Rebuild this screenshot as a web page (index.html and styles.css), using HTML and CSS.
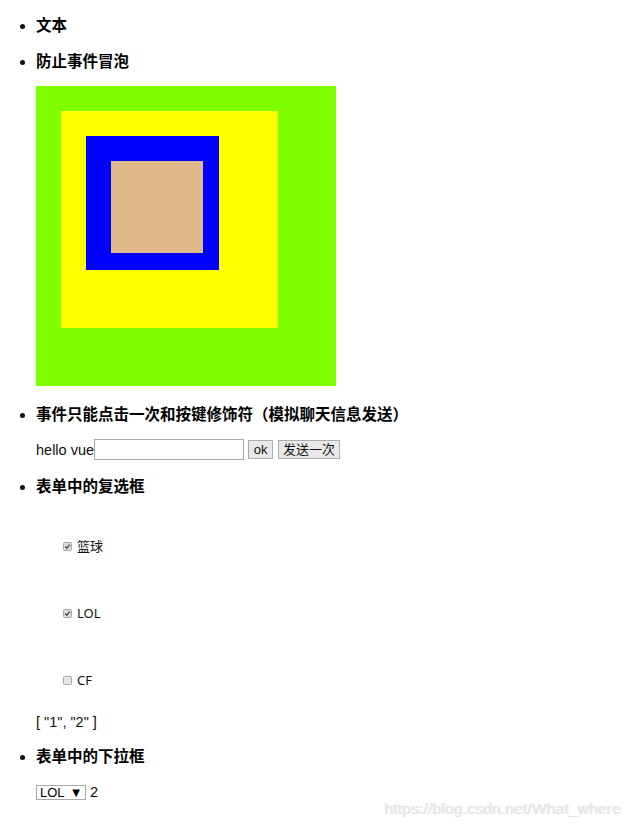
FILE: index.html
```html
<!DOCTYPE html>
<html lang="zh">
<head>
<meta charset="utf-8">
<title>Vue demo</title>
<link rel="stylesheet" href="styles.css">
</head>
<body>
<ul class="list">
  <li class="item">
    <h3 class="title">文本</h3>
  </li>
  <li class="item">
    <h3 class="title title-gap16">防止事件冒泡</h3>
    <div class="box box-green">
      <div class="box box-yellow">
        <div class="box box-blue">
          <div class="box box-tan"></div>
        </div>
      </div>
    </div>
  </li>
  <li class="item">
    <h3 class="title title-gap18">事件只能点击一次和按键修饰符（模拟聊天信息发送）</h3>
    <div class="send-row"><span class="text">hello vue</span><input class="text-input" type="text"><button class="btn btn-ok">ok</button><button class="btn btn-once">发送一次</button></div>
  </li>
  <li class="item">
    <h3 class="title title-gap16">表单中的复选框</h3>
    <div class="checks">
      <label class="check-row">
        <svg class="cb" width="9" height="9" viewBox="0 0 9 9"><rect x="0.5" y="0.5" width="8" height="8" rx="1" fill="#dcdcdc" stroke="#a8a8a8"/><path d="M2.2 4.6 L3.8 6.2 L6.8 2.6" fill="none" stroke="#4a4a4a" stroke-width="1.4"/></svg>
        <span class="check-text">篮球</span>
      </label>
      <label class="check-row">
        <svg class="cb" width="9" height="9" viewBox="0 0 9 9"><rect x="0.5" y="0.5" width="8" height="8" rx="1" fill="#dcdcdc" stroke="#a8a8a8"/><path d="M2.2 4.6 L3.8 6.2 L6.8 2.6" fill="none" stroke="#4a4a4a" stroke-width="1.4"/></svg>
        <span class="check-text">LOL</span>
      </label>
      <label class="check-row">
        <svg class="cb" width="9" height="9" viewBox="0 0 9 9"><rect x="0.5" y="0.5" width="8" height="8" rx="1" fill="#e6e6e6" stroke="#a8a8a8"/></svg>
        <span class="check-text">CF</span>
      </label>
    </div>
    <div class="result">[ "1", "2" ]</div>
  </li>
  <li class="item">
    <h3 class="title title-gap15">表单中的下拉框</h3>
    <div class="select-row">
      <span class="select"><span>LOL</span><span class="arrow">▼</span></span>
      <span class="text">2</span>
    </div>
  </li>
</ul>
<div class="watermark">https://blog.csdn.net/What_where</div>
</body>
</html>
```
FILE: styles.css
```css
html, body {
  margin: 0;
  padding: 0;
  background: #ffffff;
}

body {
  position: relative;
  width: 626px;
  height: 825px;
  overflow: hidden;
  font-family: "Liberation Sans", "Noto Sans CJK SC", sans-serif;
  color: #111111;
}

.list {
  margin: 0;
  padding: 15px 0 0 36px;
  list-style: disc;
}

.item {
  margin: 0;
}

.title {
  margin: 0;
  padding-bottom: 2px;
  font-family: "Noto Sans CJK SC", "Liberation Sans", sans-serif;
  font-size: 15.5px;
  font-weight: bold;
  line-height: 18px;
  color: #000000;
}

.title-gap15 { margin-top: 15px; }
.title-gap16 { margin-top: 16px; }
.title-gap18 { margin-top: 18px; }

.box {
  box-sizing: border-box;
  padding: 25px;
}

.box-green {
  margin-top: 15px;
  width: 300px;
  height: 300px;
  background: #7fff00;
}

.box-yellow {
  width: 217px;
  height: 217px;
  background: #ffff00;
}

.box-blue {
  width: 133px;
  height: 134px;
  background: #0000ff;
}

.box-tan {
  width: 92px;
  height: 92px;
  padding: 0;
  background: #deb887;
}

.send-row {
  margin-top: 15px;
  height: 21px;
  display: flex;
  align-items: center;
}

.text {
  font-size: 14.5px;
  line-height: 18px;
}

.text-input {
  box-sizing: border-box;
  width: 150px;
  height: 21px;
  margin: 0;
  padding: 1px 2px;
  border: 1px solid #a9a9a9;
  background: #ffffff;
  font-size: 13px;
}

.btn {
  box-sizing: border-box;
  height: 19px;
  margin: 0;
  padding: 0;
  border: 1px solid #adadad;
  border-radius: 0;
  background: #e9e9e9;
  color: #111111;
  font-family: "Liberation Sans", "Noto Sans CJK SC", sans-serif;
  font-size: 13px;
  line-height: 17px;
}

.btn-ok {
  width: 25px;
  margin-left: 4px;
}

.btn-once {
  width: 62px;
  margin-left: 5px;
}

.checks {
  margin-top: 41px;
  padding-left: 27px;
  display: flex;
  flex-direction: column;
  gap: 49px;
}

.check-row {
  height: 18px;
  display: flex;
  align-items: center;
  gap: 5px;
}

.cb {
  display: block;
  flex: none;
}

.check-text {
  font-family: "Noto Sans", "Noto Sans CJK SC", sans-serif;
  font-size: 13px;
  line-height: 18px;
  color: #111111;
}

.result {
  margin-top: 24px;
  font-size: 14.5px;
  line-height: 18px;
}

.select-row {
  margin-top: 17px;
  display: flex;
  align-items: center;
  gap: 4px;
}

.select {
  box-sizing: border-box;
  width: 50px;
  height: 15px;
  padding: 0 5px 0 3px;
  border: 1px solid #a9a9a9;
  display: flex;
  align-items: center;
  justify-content: space-between;
  font-size: 13px;
  line-height: 13px;
  color: #000000;
}

.arrow {
  font-size: 10px;
  font-family: "DejaVu Sans", sans-serif;
}

.watermark {
  position: absolute;
  left: 384px;
  top: 800px;
  font-family: "Liberation Sans", sans-serif;
  font-size: 15.5px;
  letter-spacing: 0.2px;
  line-height: 18px;
  color: #e4e4e4;
  text-shadow: 1.5px 0 0 #ededed;
  white-space: nowrap;
}
```
